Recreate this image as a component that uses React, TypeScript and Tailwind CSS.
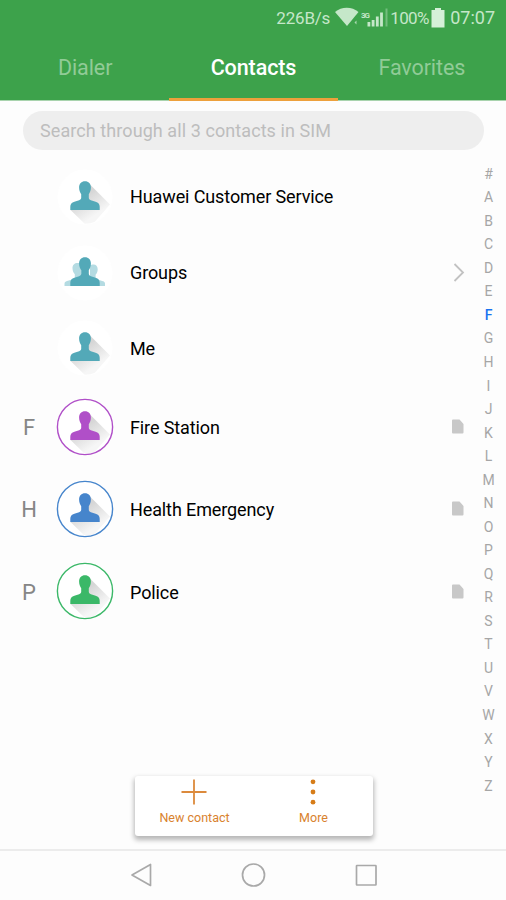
const BODY =
  'M28 12.300c-3.600 0-5.900 2.400-5.900 6.200 0 2.800.9 5 2.100 6.700v3.600c0 1.300-.8 2-2.100 2.400l-4.700 1.600c-2.700.9-4.100 2.400-4.100 5V41h29.400v-3.200c0-2.600-1.400-4.100-4.100-5l-4.700-1.600c-1.300-.4-2.100-1.100-2.100-2.400v-3.600c1.200-1.700 2.100-3.900 2.100-6.700 0-3.800-2.300-6.200-5.900-6.200z';

type AvatarProps = { id: string; color: string; ring?: boolean; group?: boolean };

function Avatar({ id, color, ring, group }: AvatarProps) {
  return (
    <svg width="58" height="58" viewBox="-1 -1 58 58" className="shrink-0">
      <defs>
        <linearGradient id={id + '-shade'} gradientUnits="userSpaceOnUse" x1="28" y1="27" x2="40" y2="45">
          <stop offset="0" stopColor="#d6d6d6" />
          <stop offset="1" stopColor="#f6f6f6" />
        </linearGradient>
        <clipPath id={id + '-clip'}>
          <circle cx="28" cy="28" r="26.8" />
        </clipPath>
      </defs>
      <circle cx="28" cy="28" r="27.5" fill="#fff" />
      {group ? (
        <g fill="#b4dbe2">
          <path d="M20.500 18c-3 0-5 2-5 5 0 2.800 1 5 2.300 6.200V33H24V18.800c-1-.5-2-.8-3.500-.8zM36.500 19.500c2.500 0 4.200 2 4.200 4.800 0 2.400-.9 4.300-2.100 5.400V33H33V20.300c1-.5 2-.8 3.500-.8z" />
          <path d="M7.500 41v-2.200c0-1.500 1-2.300 2.500-2.700L17 34h22l7 2.300c1.300.4 2 1.100 2 2.500V41z" />
        </g>
      ) : (
        <g clipPath={`url(#${id}-clip)`}>
          <path d="M32 14.500 53 35.500 35 56H29L13.500 41 28 30z" fill={`url(#${id}-shade)`} />
        </g>
      )}
      <path d={BODY} fill={color} />
      {ring && <circle cx="28" cy="28" r="27.600" fill="none" stroke={color} strokeWidth="1.400" />}
    </svg>
  );
}

function SimCard() {
  return (
    <svg width="12" height="15" viewBox="0 0 12 15">
      <path d="M1 .5h6.500L11.500 5v8.500a1 1 0 0 1-1 1H1a1 1 0 0 1-1-1v-12a1 1 0 0 1 1-1z" fill="#c8c8c8" />
    </svg>
  );
}

const SHORTCUTS = [
  { id: 'service', name: 'Huawei Customer Service' },
  { id: 'groups', name: 'Groups', group: true },
  { id: 'me', name: 'Me' },
];

const CONTACTS = [
  { letter: 'F', name: 'Fire Station', color: '#b04fc8' },
  { letter: 'H', name: 'Health Emergency', color: '#4685cc' },
  { letter: 'P', name: 'Police', color: '#3bb868' },
];

const INDEX = '#ABCDEFGHIJKLMNOPQRSTUVWXYZ'.split('');

export default function App() {
  return (
    <div className="flex h-[900px] w-[506px] flex-col overflow-hidden bg-[#fdfdfd] font-['Roboto','Liberation_Sans',sans-serif] text-black">
      <header className="flex h-[101px] shrink-0 flex-col border-b border-[#a8d3ad] bg-[#3da24b]">
        <div className="flex h-[36px] shrink-0 items-center justify-end pr-[11px] text-[#c5e7c9]">
          <span className="mr-[5px] text-[17px] leading-none tracking-[-0.2px]">226B/s</span>
          <svg width="56" height="22" viewBox="335 7 56 22" fill="#c5e7c9">
            <path d="M335 12C341.500 6.300 352 6.300 358.500 12L347 26z" />
            <path d="M353.500 19.500h6v8h-6z" fill="#3da24b" />
            <path d="m354.500 22.500 2-2v4z" opacity=".8" />
            <text x="361" y="17.500" fontSize="8" fontWeight="700" fontFamily="Roboto, sans-serif" textLength="9">3G</text>
            <path d="M367.500 22h2.800v4.500h-2.800zM371.700 20h2.800v6.500h-2.800zM375.900 16.500h2.800v10h-2.800zM380.100 12.500h2.800v14h-2.800z" />
            <path d="M385.500 8.500h2v18h-2z" opacity=".4" />
          </svg>
          <span className="-ml-px mr-px w-[38px] text-[17px] leading-none tracking-[-0.6px]">100%</span>
          <svg width="14" height="20" viewBox="0 0 14 20" className="ml-[2px] mr-[5px]">
            <path d="M4 0h6v2h3.500v17.500H.5V2H4z" fill="#d5f0d8" />
          </svg>
          <span className="text-[18px] leading-none">07:07</span>
        </div>
        <nav className="-mb-px grid h-[65px] shrink-0 grid-cols-3 pl-px pt-px text-center text-[21.5px] leading-[61px] text-[#91cb97]">
          <span className="tracking-[-0.1px]">Dialer</span>
          <span className="border-b-[3px] border-[#eda03c] font-medium tracking-[-0.1px] text-white">Contacts</span>
          <span className="tracking-[-0.1px]">Favorites</span>
        </nav>
      </header>

      <main className="flex min-h-0 flex-1">
        <div className="flex w-[484px] shrink-0 flex-col">
          <div className="ml-[23px] mt-[10px] flex h-[39px] shrink-0 items-center rounded-full bg-[#eeeeee] pb-px pl-[17px] text-[18px] tracking-[0.08px] text-[#bdbdbd]">
            Search through all 3 contacts in SIM
          </div>
          <div className="mt-[9px] flex flex-col">
            {SHORTCUTS.map((s) => (
              <div key={s.id} className="flex h-[75.8px] items-center pl-[56px] pr-[19px]">
                <Avatar id={s.id} color="#53a9b8" group={s.group} />
                <span className="ml-[16px] flex-1 text-[18px] tracking-[-0.11px]">{s.name}</span>
                {s.group && (
                  <svg width="12" height="20" viewBox="0 0 12 20" fill="none" stroke="#c2c2c2" strokeWidth="1.800">
                    <path d="m1.500 1 8.500 8.500-8.500 8.500" />
                  </svg>
                )}
              </div>
            ))}
            {CONTACTS.map((c) => (
              <div key={c.letter} className="flex h-[82.4px] items-center pr-[20px]">
                <span className="w-[56px] pl-[2px] text-center text-[22px] text-[#868686]">{c.letter}</span>
                <div className="-mt-px mb-px flex">
                  <Avatar id={c.letter} color={c.color} ring />
                </div>
                <span className="ml-[16px] flex-1 text-[18px] tracking-[-0.11px]">{c.name}</span>
                <div className="-mt-px mb-px flex">
                  <SimCard />
                </div>
              </div>
            ))}
          </div>
          <div className="ml-[135px] mt-[142px] grid h-[60px] w-[238px] shrink-0 grid-cols-2 rounded-[3px] bg-white text-[12.5px] text-[#d9822e] shadow-[0_3px_5px_1px_rgba(0,0,0,0.28)]">
            <div className="flex flex-col items-center pt-[3px]">
              <svg width="26" height="26" viewBox="0 0 26 26" fill="none" stroke="#dc8a3c" strokeWidth="1.800" className="mr-px">
                <path d="M13 .5v25M.5 13h25" />
              </svg>
              <span className="mt-[4px] leading-[18px]">New contact</span>
            </div>
            <div className="flex flex-col items-center pt-[3px]">
              <svg width="26" height="26" viewBox="0 0 26 26" fill="#d67c18" className="mr-[2px]">
                <circle cx="13" cy="2.800" r="2.400" />
                <circle cx="13" cy="13" r="2.400" />
                <circle cx="13" cy="23.200" r="2.400" />
              </svg>
              <span className="mt-[4px] leading-[18px]">More</span>
            </div>
          </div>
        </div>
        <div className="flex w-[9px] flex-col items-center pt-[61px] text-[14px] leading-none text-[#a6a6a6]">
          {INDEX.map((l) => (
            <span key={l} className={l === 'F' ? 'flex h-[23.54px] shrink-0 items-center font-medium text-[#1a73f0]' : 'flex h-[23.54px] shrink-0 items-center'}>
              {l}
            </span>
          ))}
        </div>
      </main>

      <footer className="flex h-[51px] shrink-0 justify-center border-t-2 border-[#ececec] pt-[12px]">
        <svg width="250" height="25" viewBox="128 863 250 25" fill="none" stroke="#a9a9a9" strokeWidth="1.700" strokeLinejoin="round">
          <path d="M150.500 864.500v21l-18.500-10.500z" />
          <circle cx="253.500" cy="875" r="11" />
          <rect x="356.500" y="865.500" width="19.500" height="19.500" rx=".5" />
        </svg>
      </footer>
    </div>
  );
}
